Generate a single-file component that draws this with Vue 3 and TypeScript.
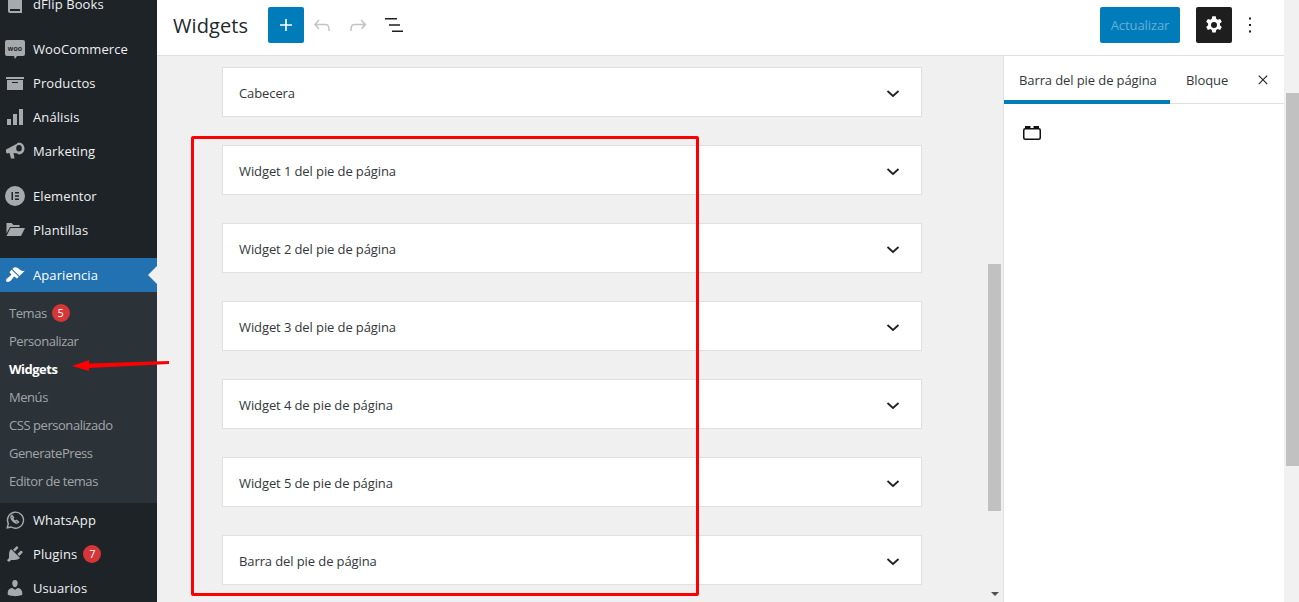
<script setup lang="ts">
interface MenuItem { label: string; icon: string; gap?: boolean; badge?: string }
const top: MenuItem[] = [
  { label: 'dFlip Books', icon: 'book' },
  { label: 'WooCommerce', icon: 'woo', gap: true },
  { label: 'Productos', icon: 'box' },
  { label: 'Análisis', icon: 'bars' },
  { label: 'Marketing', icon: 'mega' },
  { label: 'Elementor', icon: 'elem', gap: true },
  { label: 'Plantillas', icon: 'folder' },
]
const sub = [
  { label: 'Temas', badge: '5' },
  { label: 'Personalizar' },
  { label: 'Widgets', current: true },
  { label: 'Menús' },
  { label: 'CSS personalizado' },
  { label: 'GeneratePress' },
  { label: 'Editor de temas' },
]
const bottom: MenuItem[] = [
  { label: 'WhatsApp', icon: 'wa' },
  { label: 'Plugins', icon: 'plug', badge: '7' },
  { label: 'Usuarios', icon: 'user' },
]
const areas = [
  'Cabecera',
  'Widget 1 del pie de página',
  'Widget 2 del pie de página',
  'Widget 3 del pie de página',
  'Widget 4 de pie de página',
  'Widget 5 de pie de página',
  'Barra del pie de página',
]
</script>

<template>
  <div class="page">
    <aside class="side">
      <template v-for="item in top" :key="item.label">
        <a class="row" :class="{ gap: item.gap }">
          <span class="ic">
            <svg v-if="item.icon === 'book'" viewBox="0 0 20 20"><path d="M3 1h14v18H5a2 2 0 0 1-2-2zM5 15v2h10v-2z" fill-rule="evenodd"/></svg>
            <svg v-else-if="item.icon === 'woo'" viewBox="0 0 20 20"><path d="M2 1h16a2 2 0 0 1 2 2v12a2 2 0 0 1-2 2h-6l-2 3-1-3H2a2 2 0 0 1-2-2V3a2 2 0 0 1 2-2z"/><text x="10" y="11.500" text-anchor="middle" class="woot">woo</text></svg>
            <svg v-else-if="item.icon === 'box'" viewBox="0 0 20 20"><path d="M19 4v2H1V4h18zM2 7h16v10H2V7zm11 3V9H7v1h6z"/></svg>
            <svg v-else-if="item.icon === 'bars'" viewBox="0 0 20 20"><path d="M18 18V2h-4v16h4zm-6 0V7H8v11h4zm-6 0v-6H2v6h4z"/></svg>
            <svg v-else-if="item.icon === 'mega'" viewBox="0 0 20 20"><path fill-rule="evenodd" d="M1 8.500l10.500-5.500 1 9.500-4-.5 1 5.500H6l-1.500-5.500-2.500.5-1-1zM14 1.500a5.500 6 0 0 1 0 12 2.500 2.500 0 0 1-1.500-.8l-1-9.700a3 3 0 0 1 2.500-1.500zm0 2.500a2.800 3.300 0 1 0 0 6.600 2.800 3.300 0 0 0 0-6.600z"/></svg>
            <svg v-else-if="item.icon === 'elem'" viewBox="0 0 20 20"><path d="M10 0a10 10 0 1 1 0 20 10 10 0 0 1 0-20zM6.500 6v8H8V6zM10 6v1.500h4V6zm0 3.200v1.500h4V9.200zm0 3.300V14h4v-1.500z" fill-rule="evenodd"/></svg>
            <svg v-else-if="item.icon === 'folder'" viewBox="0 0 20 20"><path d="M1.500 3h5l2 2h6v2H5L1.500 13.500zM5.500 8H20l-4 8H1.500z"/></svg>
          </span>
          <span class="lbl">{{ item.label }}</span>
        </a>
      </template>
      <a class="row gap active">
        <span class="ic"><svg viewBox="0 0 20 20"><path d="M14.480 11.060L7.410 3.990l1.500-1.500c.5-.56 2.300-.47 3.510.32 1.210.8 1.430 1.280 2.910 2.100 1.180.64 2.450 1.260 4.450.85zm-.71.71L6.700 4.700 4.930 6.470c-.39.39-.39 1.020 0 1.410l1.060 1.060c.39.39.39 1.030 0 1.420-.6.6-1.430 1.110-2.210 1.690-.35.26-.7.53-1.010.84C1.430 13.230.4 15.590 1.430 16.620c1.030 1.030 3.390 0 4.730-1.340.3-.31.58-.66.84-1.010.58-.78 1.090-1.610 1.690-2.210.39-.39 1.020-.39 1.410 0l1.060 1.060c.39.39 1.020.39 1.410 0z"/></svg></span>
        <span class="lbl">Apariencia</span>
        <i class="notch"></i>
      </a>
      <ul class="submenu">
        <li v-for="s in sub" :key="s.label" :class="{ current: s.current }">
          {{ s.label }}<b v-if="s.badge" class="badge">{{ s.badge }}</b>
        </li>
      </ul>
      <a v-for="item in bottom" :key="item.label" class="row">
        <span class="ic">
          <svg v-if="item.icon === 'wa'" viewBox="0 0 20 20"><path class="line" d="M2.200 17.800l1.100-4.100A8 8 0 1 1 6.300 17zM7 5.500c-2 1-1 3.500 1 5.500s4.500 3 5.500 1l-2-1.500-1 .8c-1-.3-2.500-1.800-2.800-2.800l.8-1z"/></svg>
          <svg v-else-if="item.icon === 'plug'" viewBox="0 0 20 20"><path d="M13.110 4.360L9.870 7.600 8 5.730l3.240-3.240c.35-.34 1.050-.2 1.560.32.520.51.660 1.210.310 1.550zm-8 1.770l.91-1.120 9.010 9.010-1.190.84c-.71.71-2.630 1.160-3.820 1.160H6.140L4.900 17.260c-.59.59-1.540.59-2.120 0-.59-.58-.59-1.530 0-2.120l1.240-1.240v-3.880c0-1.130.4-3.190 1.090-3.890zm7.260 3.970l3.240-3.240c.34-.35 1.040-.21 1.550.31.520.51.660 1.210.310 1.550l-3.240 3.250z"/></svg>
          <svg v-else-if="item.icon === 'user'" viewBox="0 0 20 20"><path d="M10 9.250c-2.270 0-2.730-3.440-2.730-3.440C7 4.020 7.820 2 9.970 2c2.160 0 2.980 2.020 2.710 3.810 0 0-.41 3.440-2.680 3.440zm0 2.570L12.720 10c2.390 0 4.520 2.330 4.520 4.530v2.490s-3.650 1.130-7.240 1.130c-3.650 0-7.240-1.130-7.240-1.130v-2.490c0-2.250 1.940-4.480 4.470-4.480z"/></svg>
        </span>
        <span class="lbl">{{ item.label }}</span>
        <b v-if="item.badge" class="badge big">{{ item.badge }}</b>
      </a>
    </aside>

    <div class="editor">
      <header class="bar">
        <h1>Widgets</h1>
        <button class="add" aria-label="Añadir">
          <svg viewBox="0 0 24 24"><path d="M18 11.200h-5.200V6h-1.600v5.200H6v1.600h5.200V18h1.600v-5.200H18z"/></svg>
        </button>
        <button class="tool off" aria-label="Deshacer">
          <svg viewBox="0 0 24 24"><path d="M18.300 11.700c-.6-.6-1.400-.9-2.300-.9H6.700l2.900-3.300-1.100-1-4.500 5L8.500 16.500l1-1-2.700-3.200H16c.5 0 .9.200 1.300.5 1 1 1 3.400 1 4.700V18h1.500v-.5c0-1.700-.1-4.100-1.500-5.800z"/></svg>
        </button>
        <button class="tool off" aria-label="Rehacer">
          <svg viewBox="0 0 24 24"><path d="M15.600 6.500l-1.100 1 2.900 3.300H8c-.9 0-1.700.3-2.300.9-1.400 1.500-1.400 4.200-1.400 5.800v.5h1.500v-.5c0-1.300 0-3.700 1-4.700.3-.3.700-.5 1.300-.5h9.200L15 15.500l1 1 4.500-5z"/></svg>
        </button>
        <button class="tool" aria-label="Vista de lista">
          <svg viewBox="0 0 24 24"><path d="M3 5h12v1.500H3zM7 11.200h11v1.500H7zM10 17.500h11V19H10z"/></svg>
        </button>
        <span class="spacer"></span>
        <button class="publish">Actualizar</button>
        <button class="gear" aria-label="Ajustes">
          <svg viewBox="0 0 24 24"><path fill-rule="evenodd" d="M10.300 3.300h3.400l.5 2.500 1.500.9 2.400-.8 1.700 2.900-1.900 1.700v1.800l1.900 1.700-1.700 2.900-2.400-.8-1.500.9-.5 2.500h-3.400l-.5-2.500-1.500-.9-2.400.8-1.700-2.900 1.900-1.700v-1.800L4.200 8.800l1.700-2.900 2.400.8 1.500-.9zM12 9a3 3 0 1 0 0 6 3 3 0 0 0 0-6z"/></svg>
        </button>
        <button class="more" aria-label="Opciones">
          <svg viewBox="0 0 24 24"><path d="M11 4.500h2v2h-2zM11 11h2v2h-2zM11 17.500h2v2h-2z"/></svg>
        </button>
      </header>

      <div class="body">
        <main class="canvas">
          <section v-for="a in areas" :key="a" class="card">
            <span>{{ a }}</span>
            <svg class="chev" viewBox="0 0 24 24"><path d="M17.500 10l-5.500 5-5.500-5" fill="none" stroke="currentColor" stroke-width="1.700"/></svg>
          </section>
          <div class="vscroll">
            <i class="thumb"></i>
            <i class="down"></i>
          </div>
        </main>
        <aside class="panel">
          <div class="tabs">
            <span class="tab on">Barra del pie de página</span>
            <span class="tab">Bloque</span>
            <svg class="close" viewBox="0 0 24 24"><path d="M13 11.800l5.200-5.200-1.100-1-5.100 5.200-5.200-5.200-1 1 5.200 5.200-5.200 5.100 1 1.100 5.200-5.200 5.100 5.200 1.100-1.100z"/></svg>
          </div>
          <svg class="footer-ic" viewBox="0 0 24 24"><rect x="3.750" y="8.750" width="16.500" height="10.500" rx="1.500" fill="none" stroke="#111" stroke-width="1.500"/><path d="M5 6h5.500v2.500H5zM13.500 6H19v2.500h-5.500z"/></svg>
        </aside>
      </div>
    </div>

    <div class="pagescroll"><i></i></div>

    <div class="redbox"></div>
    <svg class="arrow" viewBox="0 0 110 20" width="110" height="20">
      <path d="M99 3L19 5.500V2L2 8l17 5v-3L99 6z" fill="#f00"/>
    </svg>
  </div>
</template>

<style>
html, body { margin: 0; height: 100%; overflow: hidden; }
</style>

<style scoped>
.page {
  position: relative;
  display: flex;
  width: 1299px;
  height: 602px;
  overflow: hidden;
  font-family: "Open Sans", "Noto Sans", sans-serif;
  background: #f0f0f1;
}
.side {
  width: 157px;
  flex: none;
  height: 615px;
  margin-top: -13px;
  background: #1d2327;
  color: #f0f0f1;
  font-size: 13px;
}
.row {
  display: flex;
  align-items: center;
  height: 34px;
  position: relative;
  letter-spacing: .1px;
}
.row.gap { margin-top: 11px; }
.ic {
  width: 33px;
  flex: none;
  display: flex;
  justify-content: center;
  padding-right: 3px;
  box-sizing: border-box;
}
.ic svg { width: 20px; height: 20px; fill: #a7aaad; }
.ic .line { fill: none; stroke: #a7aaad; stroke-width: 1.400; }
.woot { font: 700 7px "Liberation Sans", sans-serif; fill: #1d2327; }
.row.active { background: #2271b1; color: #fff; }
.row.active .ic svg { fill: #fff; }
.notch {
  position: absolute;
  right: 0;
  top: 8px;
  border: 9px solid transparent;
  border-left-width: 0;
  border-right-color: #f0f0f1;
}
.submenu {
  list-style: none;
  margin: 0;
  padding: 7px 0;
  height: 197px;
  background: #2c3338;
  color: #c3c4c7cc;
  font-size: 13px;
  letter-spacing: -.45px;
}
.submenu li {
  height: 28px;
  line-height: 28px;
  padding-left: 9px;
  display: flex;
  align-items: center;
}
.submenu li.current { color: #fff; font-weight: 700; letter-spacing: -.5px; }
.badge {
  display: inline-block;
  width: 18px;
  height: 18px;
  margin-left: 5px;
  border-radius: 50%;
  background: #d63638;
  color: #fff;
  font-size: 11px;
  line-height: 18px;
  text-align: center;
  font-weight: 400;
  letter-spacing: 0;
}
.badge.big { margin-left: 6px; }
.editor {
  width: 1127px;
  flex: none;
  display: flex;
  flex-direction: column;
  min-width: 0;
}
.bar {
  height: 50px;
  flex: none;
  display: flex;
  align-items: center;
  background: #fff;
  border-bottom: 1px solid #e0e0e0;
  padding-bottom: 5px;
  color: #1e1e1e;
}
.bar h1 {
  margin: 0 0 0 16px;
  width: 95px;
  font-size: 20px;
  font-weight: 400;
  letter-spacing: .1px;
  color: #23282d;
}
button {
  border: 0;
  padding: 0;
  background: none;
  font-family: inherit;
  display: flex;
  align-items: center;
  justify-content: center;
}
.add, .gear {
  width: 36px;
  height: 36px;
  border-radius: 2px;
}
.add { background: #007cba; }
.add svg { width: 24px; height: 24px; fill: #fff; }
.tool { width: 36px; height: 36px; }
.tool svg { width: 24px; height: 24px; fill: #1e1e1e; }
.tool.off svg { fill: #c4c4c4; }
.spacer { flex: 1; }
.publish {
  width: 80px;
  height: 36px;
  border-radius: 2px;
  background: #007cba;
  color: #66b0d6;
  font-size: 13px;
  letter-spacing: -.1px;
}
.gear { margin-left: 16px; background: #1e1e1e; }
.gear svg { width: 24px; height: 24px; fill: #fff; }
.more { width: 36px; height: 36px; margin-right: 16px; }
.more svg { width: 24px; height: 24px; fill: #1e1e1e; }
.body { flex: 1; display: flex; min-height: 0; }
.canvas {
  position: relative;
  width: 847px;
  flex: none;
  box-sizing: border-box;
  padding: 11px 0 0 65px;
  display: flex;
  flex-direction: column;
  gap: 28px;
  overflow: hidden;
  border-right: 1px solid #e0e0e0;
}
.card {
  width: 700px;
  height: 50px;
  flex: none;
  box-sizing: border-box;
  display: flex;
  align-items: center;
  justify-content: space-between;
  padding: 2px 16px 0;
  background: #fff;
  border: 1px solid #e0e0e0;
  font-size: 13px;
  color: #32373c;
  letter-spacing: -.1px;
}
.chev { width: 24px; height: 24px; color: #1e1e1e; }
.vscroll {
  position: absolute;
  right: 2px;
  top: 0;
  bottom: 0;
  width: 13px;
}
.thumb {
  position: absolute;
  top: 208px;
  height: 247px;
  left: 0;
  right: 0;
  background: #c1c1c1;
}
.down {
  position: absolute;
  bottom: 6px;
  left: 3px;
  border: 4px solid transparent;
  border-bottom-width: 0;
  border-top-color: #505050;
}
.panel {
  width: 280px;
  flex: none;
  background: #fff;
  box-sizing: border-box;
}
.tabs {
  display: flex;
  align-items: center;
  height: 48px;
  box-sizing: border-box;
  border-bottom: 1px solid #e0e0e0;
  position: relative;
  font-size: 13px;
  color: #32373c;
  letter-spacing: -.1px;
}
.tab {
  height: 48px;
  line-height: 48px;
  padding: 0 15px;
  box-sizing: border-box;
}
.tab.on {
  box-shadow: inset 0 -4px 0 #007cba;
  width: 166px;
  white-space: nowrap;
}
.tab + .tab { padding-left: 16px; }
.close { position: absolute; right: 12px; top: 15px; width: 18px; height: 18px; fill: #1e1e1e; }
.footer-ic { display: block; width: 24px; height: 24px; margin: 16px 0 0 16px; fill: #111; }
.pagescroll {
  flex: 1;
  position: relative;
  background: #f1f1f1;
}
.pagescroll i {
  position: absolute;
  left: 2px;
  right: 0;
  top: 93px;
  height: 373px;
  background: #c1c1c1;
}
.redbox {
  position: absolute;
  left: 191px;
  top: 136px;
  width: 508px;
  height: 460px;
  box-sizing: border-box;
  border: 3px solid #f00;
  border-radius: 2px;
  pointer-events: none;
}
.arrow {
  position: absolute;
  left: 70px;
  top: 358px;
  pointer-events: none;
}
</style>
